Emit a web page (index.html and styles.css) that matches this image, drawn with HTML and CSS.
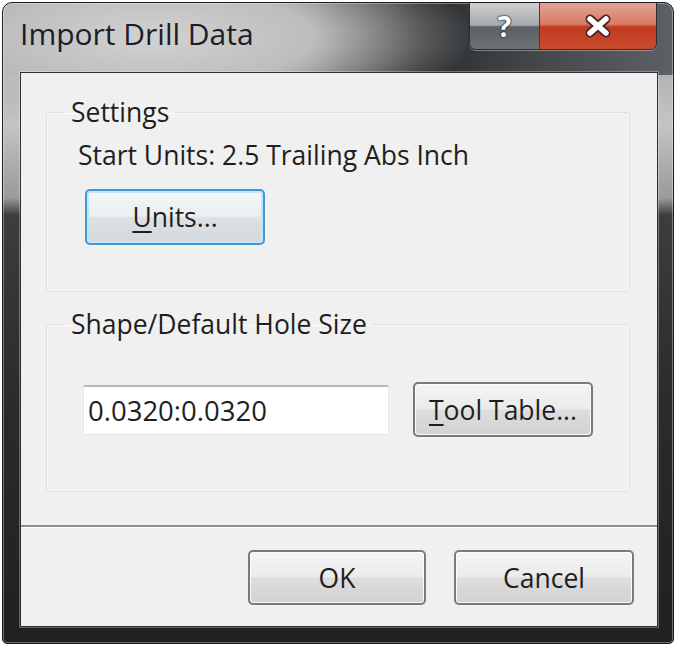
FILE: index.html
```html
<!DOCTYPE html>
<html>
  <head>
    <meta charset="UTF-8">
    <title>Import Drill Data</title>
    <link rel="stylesheet" href="styles.css">
  </head>

  <body>
    <div class="window">
      <div class="titlebar">
        <span class="title">Import Drill Data</span>
        <div class="captions">
          <div class="cap help">?</div>
          <div class="cap close">
            <svg width="30" height="24" viewBox="0 0 30 24">
              <path d="M7 5 L23 19 M23 5 L7 19" stroke="#4a2a24" stroke-width="9" stroke-linecap="round"/>
              <path d="M7 5 L23 19 M23 5 L7 19" stroke="#ffffff" stroke-width="5.5" stroke-linecap="round"/>
            </svg>
          </div>
        </div>
      </div>

      <div class="client">
        <div class="content">
          <fieldset class="group settings">
            <legend>Settings</legend>
            <div class="info">Start Units: 2.5 Trailing Abs Inch</div>
            <button class="btn default units"><u>U</u>nits...</button>
          </fieldset>

          <fieldset class="group hole">
            <legend>Shape/Default Hole Size</legend>
            <div class="row">
              <input class="field" type="text" value="0.0320:0.0320">
              <button class="btn tools"><u>T</u>ool Table...</button>
            </div>
          </fieldset>
        </div>

        <div class="footer">
          <button class="btn ok">OK</button>
          <button class="btn cancel">Cancel</button>
        </div>
      </div>
    </div>
  </body>
</html>
```

FILE: styles.css
```css
body {
  margin: 0;
  background: #ffffff;
  font-family: "Open Sans", "Noto Sans", sans-serif;
  color: #1e1e1e;
}

.window {
  margin: 2px;
  width: 672px;
  height: 642px;
  box-sizing: border-box;
  border: 1px solid #1b1c1e;
  border-radius: 10px 10px 5px 5px;
  display: flex;
  flex-direction: column;
  box-shadow: inset 0 0 0 1px rgba(255, 255, 255, 0.35);
  background:
    radial-gradient(ellipse 320px 95px at 150px 34px, #d2d2d2 0%, #bdbdbd 50%, rgba(170, 170, 170, 0) 100%),
    linear-gradient(to right, #a4a4a4 0%, #9c9c9c 32%, #3a3b3d 50%, #2a2c2e 62%, #45484b 80%, #5d6064 100%) top / 100% 72px no-repeat,
    linear-gradient(to bottom, #9a9a9a 0px, #c4c4c4 120px, #9a9a9a 195px, #3c3d3f 212px, #2a2b2d 400px, #1f2022 100%);
}

.titlebar {
  height: 69px;
  display: flex;
  justify-content: space-between;
  align-items: flex-start;
  padding-left: 17px;
}

.title {
  margin-top: 12px;
  font-size: 30px;
  line-height: 38px;
  color: #1c1c2a;
}

.captions {
  display: flex;
  margin-right: 16px;
  height: 46px;
  border: 1px solid #2c2e30;
  border-top: none;
  border-radius: 0 0 7px 7px;
  overflow: hidden;
  box-shadow: 0 1px 0 rgba(255, 255, 255, 0.35), inset 0 0 0 1px rgba(255, 255, 255, 0.35);
}

.cap {
  display: flex;
  align-items: center;
  justify-content: center;
}

.help {
  width: 69px;
  border-right: 1px solid #3a3c3e;
  background: linear-gradient(to bottom, #cfcfcf 0%, #a9aaab 48%, #5c6065 52%, #6d7176 100%);
  font-weight: bold;
  font-size: 28px;
  color: #ffffff;
  text-shadow: 0 0 2px #303238, 0 0 2px #303238, 0 0 1px #303238;
}

.close {
  width: 116px;
  background: linear-gradient(to bottom, #e4a395 0%, #d87a66 46%, #c23a20 52%, #c94a2e 100%);
}

.client {
  margin: 0 15px 0 17px;
  height: 555px;
  box-sizing: border-box;
  border: 1px solid #2f3032;
  box-shadow: 0 0 0 1px rgba(255, 255, 255, 0.3);
  background: #f0f0f0;
  display: flex;
  flex-direction: column;
}

.content {
  height: 452px;
  padding-left: 25px;
}

.group {
  margin: 0;
  width: 584px;
  box-sizing: border-box;
  padding: 0;
  border: 1px solid #d6dfe6;
  border-radius: 4px;
  box-shadow: inset 0 0 0 1px #f8fafb;
}

.group legend {
  margin-left: 18px;
  padding: 0 6px;
  font-size: 26.5px;
  line-height: 28px;
}

.settings {
  margin-top: 25px;
  padding-bottom: 46px;
}

.info {
  margin: 15px 0 0 31px;
  font-size: 26.5px;
  line-height: 28px;
}

.btn {
  font-family: "Open Sans", "Noto Sans", sans-serif;
  font-size: 26.5px;
  color: #1e1e1e;
  padding: 0;
  box-sizing: border-box;
  border: 2px solid #7a7a7a;
  border-radius: 5px;
  background: linear-gradient(to bottom, #f4f4f4 0%, #ebebeb 48%, #dddddd 52%, #d2d2d2 100%);
  box-shadow: inset 0 0 0 1px #fbfbfb;
}

.btn u {
  text-underline-offset: 4px;
}

.default {
  border-color: #3c9ad8;
  background: linear-gradient(to bottom, #f4f7f9 0%, #eaeef1 48%, #dde1e4 52%, #d3d8dc 100%);
  box-shadow: inset 0 0 0 2px #c4e5f6;
}

.units {
  display: block;
  margin: 20px 0 0 38px;
  width: 180px;
  height: 56px;
}

.hole {
  margin-top: 18px;
  padding-bottom: 54px;
}

.row {
  display: flex;
  align-items: center;
  gap: 24px;
  margin: 44px 0 0 36px;
}

.field {
  width: 306px;
  height: 50px;
  box-sizing: border-box;
  border: 1px solid #e2e6ea;
  border-top: 2px solid #b4b6b9;
  border-radius: 2px;
  background: #ffffff;
  padding: 0 0 0 4px;
  font-family: "Open Sans", "Noto Sans", sans-serif;
  font-size: 27.5px;
  color: #1e1e1e;
}

.tools {
  width: 180px;
  height: 55px;
}

.footer {
  flex: 1;
  border-top: 2px solid #8e8e8e;
  box-shadow: inset 0 1px 0 #ffffff;
  display: flex;
  justify-content: flex-end;
  align-items: flex-start;
  gap: 28px;
  padding: 23px 23px 0 0;
}

.ok {
  width: 178px;
  height: 55px;
}

.cancel {
  width: 180px;
  height: 55px;
}
```
